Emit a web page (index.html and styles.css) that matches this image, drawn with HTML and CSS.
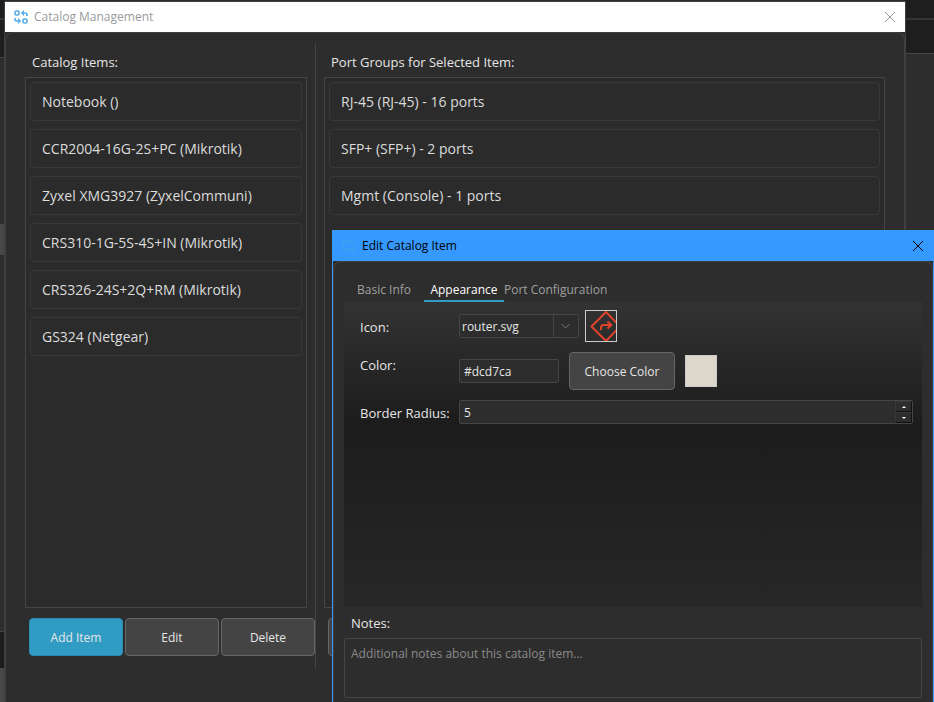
FILE: index.html
```html
<!DOCTYPE html>
<html lang="en">
<head>
    <meta charset="UTF-8">
    <meta name="viewport" content="width=device-width, initial-scale=1.0">
    <title>Catalog Management</title>
    <link rel="stylesheet" href="styles.css">
</head>
<body>
    <svg class="defs" width="0" height="0" aria-hidden="true">
        <symbol id="appIcon" viewBox="0 0 14 14">
            <g fill="none" stroke="currentColor" stroke-width="1.7">
                <rect x="1" y="1" width="4" height="4" rx="1.3"/>
                <rect x="9" y="9" width="4" height="4" rx="1.3"/>
                <path d="M8 3h3.2c1.2 0 1.8.6 1.8 1.8V6"/>
                <path d="M6 11H2.8C1.6 11 1 10.4 1 9.200V8"/>
            </g>
            <path fill="currentColor" d="M10 0v6L6.800 3zM4 8v6l3.200-3z"/>
        </symbol>
        <symbol id="closeIcon" viewBox="0 0 12 12">
            <path fill="none" stroke="currentColor" d="M1 1l10 10M11 1L1 11"/>
        </symbol>
    </svg>

    <!-- Main window, behind the dialogs -->
    <div class="desktop">
        <div class="desktop-left">
            <div class="toolbar-strip"></div>
            <div class="tab-strip"></div>
            <div class="side-strip"></div>
            <div class="handle-strip"></div>
            <div class="side-strip grow"></div>
            <div class="status-strip"></div>
            <div class="bottom-strip"></div>
        </div>
        <div class="desktop-right">
            <div class="toolbar-strip"></div>
            <div class="tab-strip"></div>
            <div class="side-strip grow"></div>
        </div>
    </div>

    <!-- Catalog Management -->
    <section class="window catalog-window">
        <header class="title-bar">
            <svg class="app-icon"><use href="#appIcon"/></svg>
            <h1>Catalog Management</h1>
            <button class="close" aria-label="Close"><svg><use href="#closeIcon"/></svg></button>
        </header>
        <div class="window-body catalog-body">
            <div class="pane items-pane">
                <h2>Catalog Items:</h2>
                <ul class="list">
                    <li>Notebook ()</li>
                    <li>CCR2004-16G-2S+PC (Mikrotik)</li>
                    <li>Zyxel XMG3927 (ZyxelCommuni)</li>
                    <li>CRS310-1G-5S-4S+IN (Mikrotik)</li>
                    <li>CRS326-24S+2Q+RM (Mikrotik)</li>
                    <li>GS324 (Netgear)</li>
                </ul>
                <div class="actions">
                    <button class="btn primary">Add Item</button>
                    <button class="btn">Edit</button>
                    <button class="btn">Delete</button>
                </div>
            </div>
            <div class="pane ports-pane">
                <h2>Port Groups for Selected Item:</h2>
                <ul class="list">
                    <li>RJ-45 (RJ-45) - 16 ports</li>
                    <li>SFP+ (SFP+) - 2 ports</li>
                    <li>Mgmt (Console) - 1 ports</li>
                </ul>
                <div class="actions">
                    <button class="btn" aria-label="Add port group"></button>
                </div>
            </div>
        </div>
    </section>

    <!-- Edit Catalog Item -->
    <section class="window edit-window">
        <header class="title-bar active">
            <svg class="app-icon"><use href="#appIcon"/></svg>
            <h1>Edit Catalog Item</h1>
            <button class="close" aria-label="Close"><svg><use href="#closeIcon"/></svg></button>
        </header>
        <div class="window-body edit-body">
            <div class="tabs" role="tablist">
                <button class="tab" role="tab">Basic Info</button>
                <button class="tab selected" role="tab" aria-selected="true">Appearance</button>
                <button class="tab last" role="tab">Port Configuration</button>
            </div>
            <div class="tab-panel">
                <label for="icon">Icon:</label>
                <div class="field">
                    <div class="combo">
                        <select id="icon">
                            <option>router.svg</option>
                        </select>
                        <svg class="chevron" viewBox="0 0 9 6"><path fill="none" stroke="currentColor" d="M.5 1l4 4 4-4"/></svg>
                    </div>
                    <svg class="icon-preview" viewBox="0 0 30 30">
                        <g fill="none" stroke="#e0432b" stroke-width="2" stroke-linejoin="round">
                            <path d="M20 1L34 15.500 20 30 5.500 15.500z"/>
                            <path d="M15 19v-2.500c0-1.500.8-2.500 2.500-2.500H25M21.500 10.500L25.500 14l-4 3.500"/>
                        </g>
                    </svg>
                </div>

                <label for="color" class="top">Color:</label>
                <div class="field color-field">
                    <input type="text" id="color" value="#dcd7ca">
                    <button class="btn">Choose Color</button>
                    <div class="swatch"></div>
                </div>

                <label for="radius">Border Radius:</label>
                <div class="spin">
                    <input type="number" id="radius" value="5">
                    <div class="spin-buttons">
                        <button class="up" aria-label="Increase"></button>
                        <button class="down" aria-label="Decrease"></button>
                    </div>
                </div>
            </div>
            <label for="notes" class="notes-label">Notes:</label>
            <textarea id="notes" placeholder="Additional notes about this catalog item..."></textarea>
        </div>
    </section>
</body>
</html>
```

FILE: styles.css
```css
* {
    box-sizing: border-box;
}
body {
    margin: 0;
    height: 100vh;
    overflow: hidden;
    position: relative;
    background: #2d2d2d;
    color: #e6e6e6;
    font-family: "Open Sans", "Noto Sans", sans-serif;
    font-size: 13px;
}
h1, h2, ul {
    margin: 0;
    padding: 0;
    font-weight: normal;
}
button, input, select, textarea {
    margin: 0;
    font-family: inherit;
    font-size: 12px;
    color: inherit;
}
.defs {
    position: absolute;
}

/* Desktop */
.desktop {
    display: flex;
    justify-content: space-between;
    height: 100%;
}
.desktop-left, .desktop-right {
    display: flex;
    flex-direction: column;
    width: 5px;
}
.desktop-right {
    width: 29px;
}
.toolbar-strip {
    height: 20px;
    background: #1e1e1e;
    border-bottom: 2px solid #353535;
}
.tab-strip {
    height: 38px;
    background: #1e1e1e;
    border-bottom: 1px solid #454545;
}
.desktop-right .tab-strip {
    height: 34px;
}
.side-strip {
    height: 166px;
}
.handle-strip {
    height: 31px;
    background: #484848;
}
.grow {
    flex: 1;
}
.status-strip {
    height: 37px;
    background: #1c1c1c;
    border-top: 1px solid #454545;
}
.bottom-strip {
    height: 34px;
    background: #484848;
}

/* Windows */
.window {
    position: absolute;
    display: flex;
    flex-direction: column;
    background: #2d2d2d;
}
.catalog-window {
    top: 2px;
    right: 29px;
    bottom: 0;
    left: 5px;
    box-shadow: 0 0 0 1px #404040;
}
.edit-window {
    top: 230px;
    right: 0;
    bottom: 0;
    left: 332px;
    border: 1px solid #3599ff;
    border-bottom: 0;
}
.title-bar {
    display: flex;
    align-items: center;
    gap: 6px;
    height: 30px;
    padding: 0 9px 1px;
    background: #fff;
    color: #999;
}
.title-bar.active {
    background: #3599ff;
    color: #000;
}
.title-bar h1 {
    flex: 1;
    font-size: 12px;
}
.app-icon {
    width: 14px;
    height: 14px;
    color: #5aaee8;
}
.active .app-icon {
    color: #3f9fef;
}
.close {
    width: 12px;
    height: 12px;
    padding: 0;
    border: 0;
    background: none;
}
.close svg {
    display: block;
    width: 12px;
    height: 12px;
}
.window-body {
    flex: 1;
    border: 1px solid #404040;
    border-bottom: 0;
    border-radius: 8px 8px 0 0;
}

/* Catalog window */
.catalog-body {
    display: grid;
    grid-template-columns: 310px 1fr;
    padding: 10px 0 33px;
}
.pane {
    display: flex;
    flex-direction: column;
}
.items-pane {
    padding-left: 19px;
    border-right: 1px solid #454545;
}
.ports-pane {
    padding: 0 19px 0 8px;
}
.pane h2 {
    height: 34px;
    padding: 0 7px;
    font-size: 13px;
    line-height: 38px;
}
.list {
    flex: 1;
    padding: 4px;
    border: 1px solid #454545;
    background: #2b2b2b;
    list-style: none;
}
.items-pane .list {
    margin-right: 8px;
}
.list li {
    height: 39px;
    margin-bottom: 8px;
    padding-left: 11px;
    border: 1px solid #383838;
    border-radius: 4px;
    color: #dcdcdc;
    font-size: 14px;
    line-height: 38px;
}
.actions {
    display: flex;
    gap: 2px;
    margin: 10px 0 13px 4px;
}
.btn {
    height: 38px;
    padding: 0;
    border: 1px solid #666;
    border-radius: 4px;
    background: #444;
}
.actions .btn {
    width: 94px;
}
.btn.primary {
    border-color: #2a8ab0;
    background: #309cc4;
}

/* Edit window */
.edit-body {
    display: flex;
    flex-direction: column;
    padding: 15px 10px 4px;
}
.tabs {
    display: flex;
    height: 25px;
}
.tab {
    width: 80px;
    padding: 2px 0 0;
    border: 0;
    border-bottom: 2px solid transparent;
    background: none;
    color: #a0a0a0;
}
.tab.selected {
    border-color: #309cc4;
    color: #fff;
}
.tab.last {
    width: auto;
}
.tab-panel {
    flex: 1;
    display: grid;
    grid-template-columns: 99px 1fr;
    gap: 10px 0;
    align-content: start;
    align-items: center;
    padding: 8px 9px 0 16px;
    background: linear-gradient(#333, #1c1c1c 40%, #272727);
}
.tab-panel label {
    padding-top: 2px;
}
.tab-panel .top {
    align-self: start;
    padding-top: 0;
    line-height: 26px;
}
.field {
    display: flex;
    align-items: center;
    gap: 6px;
}
.color-field {
    gap: 10px;
}
.color-field .btn {
    width: 106px;
}
input, select {
    height: 24px;
    padding: 0 4px;
    border: 1px solid #454545;
    border-radius: 2px;
    background: #2d2d2d;
    appearance: none;
}
.combo {
    position: relative;
    width: 120px;
    height: 24px;
}
.combo::after {
    content: "";
    position: absolute;
    top: 1px;
    right: 25px;
    bottom: 1px;
    border-left: 1px solid #454545;
}
.combo select {
    width: 100%;
    padding: 0 2px;
}
.chevron {
    position: absolute;
    top: 9px;
    right: 9px;
    width: 9px;
    height: 6px;
    color: #777;
    pointer-events: none;
}
.icon-preview {
    width: 32px;
    height: 32px;
    border: 1px solid #ccc;
    overflow: hidden;
}
#color {
    width: 100px;
}
.swatch {
    width: 32px;
    height: 32px;
    border: 1px solid #ccc;
    background: #dcd7ca;
}
.spin {
    display: flex;
    height: 24px;
    border: 1px solid #454545;
    border-radius: 2px;
    background: #2d2d2d;
}
.spin input {
    flex: 1;
    min-width: 0;
    height: 22px;
    border: 0;
    appearance: textfield;
}
.spin input::-webkit-inner-spin-button {
    display: none;
}
.spin-buttons {
    display: flex;
    flex-direction: column;
    width: 17px;
}
.spin-buttons button {
    display: flex;
    flex: 1;
    align-items: center;
    justify-content: center;
    padding: 0;
    border: 1px solid #383838;
    border-right-color: #111;
    border-bottom-color: #111;
    background: #2d2d2d;
}
.spin-buttons button::before {
    content: "";
    border: 2px solid transparent;
}
.spin-buttons .up::before {
    border-top: 0;
    border-bottom-color: #fff;
}
.spin-buttons .down::before {
    border-bottom: 0;
    border-top-color: #fff;
}
.notes-label {
    height: 31px;
    padding-left: 7px;
    line-height: 33px;
}
textarea {
    height: 60px;
    padding: 6px;
    border: 1px solid #454545;
    border-radius: 3px;
    background: #2d2d2d;
    resize: none;
}
textarea::placeholder {
    color: #8a8a8a;
}
```
